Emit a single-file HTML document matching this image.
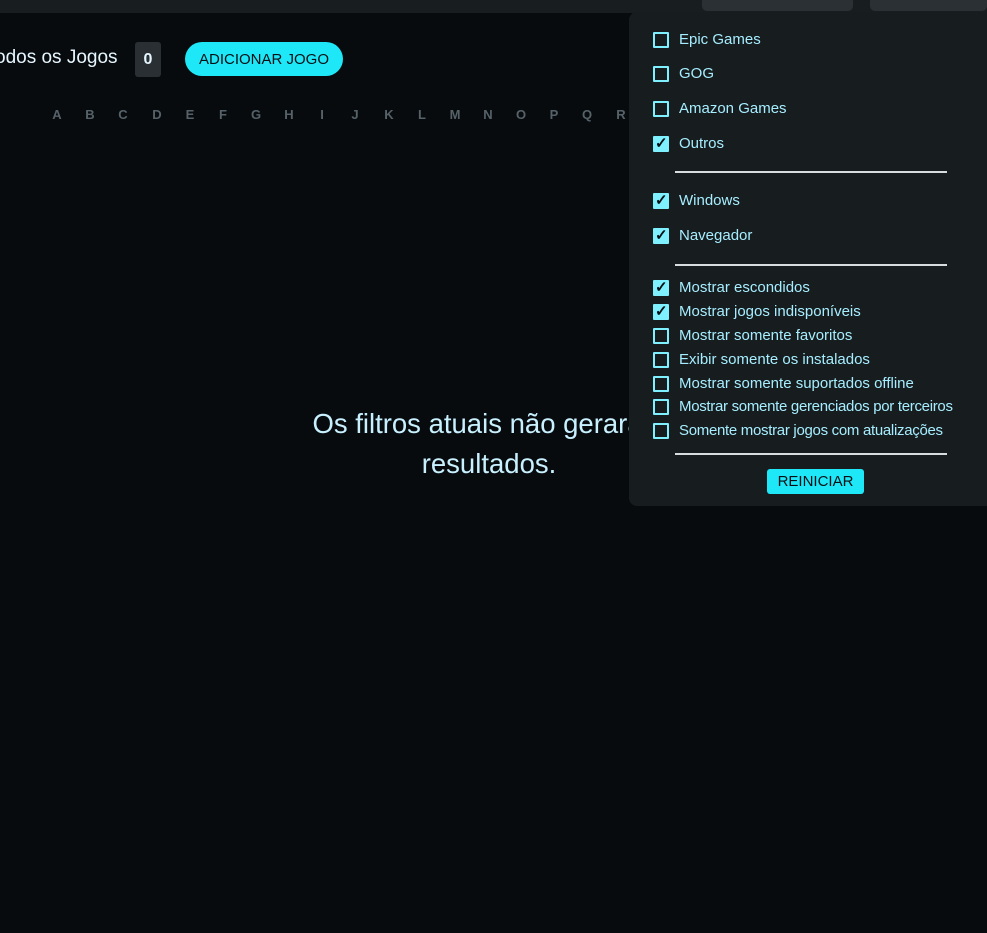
<!DOCTYPE html>
<html><head><meta charset="utf-8"><style>
*{margin:0;padding:0;box-sizing:border-box}
body{width:987px;height:933px;background:#070b0d;font-family:"Liberation Sans",sans-serif;position:relative;overflow:hidden}
.top{position:absolute;left:0;top:0;width:987px;height:13px;background:#181d20}
.tb{position:absolute;top:0;height:11px;background:#2a3034;border-radius:0 0 5px 5px}
.title{position:absolute;left:-5px;top:47px;font-size:19px;color:#e6f6ff}
.cnt{position:absolute;left:135px;top:42px;width:26px;height:35px;background:#2a2f33;border-radius:3px;color:#e6f6ff;font-size:16px;text-align:center;line-height:35px;font-weight:bold}
.add{position:absolute;left:185px;top:42px;width:158px;height:34px;background:#1ee8f8;border-radius:17px;color:#061014;font-size:15px;text-align:center;line-height:35px}
.let{position:absolute;top:107px;font-size:13px;font-weight:bold;color:#56626a;width:20px;text-align:center}
.msg{position:absolute;left:89px;width:800px;text-align:center;font-size:27.5px;color:#c8f0ff}
.pop{position:absolute;left:629px;top:12px;width:370px;height:494px;background:#171c1f;border-radius:8px}
.it{position:absolute;left:25px;font-size:15px;color:#a6eeff;line-height:18px}
.cb{position:absolute;left:-1px;top:1px;width:16px;height:16px;border:2.5px solid #7ef0ff;border-radius:1px}
.cb.on{background:#7ef0ff}
.cb.on::after{content:"✓";position:absolute;left:0px;top:-3px;font-size:15px;color:#061014;font-weight:bold}
.it span{margin-left:25px}
.hr{position:absolute;left:46px;width:272px;height:2px;background:#d8dcde}
.rst{position:absolute;left:138px;top:457px;width:97px;height:25px;background:#1ee8f8;border-radius:3px;color:#061014;font-size:15px;text-align:center;line-height:25px}
</style></head><body>
<div class="top"></div>
<div class="tb" style="left:702px;width:151px"></div>
<div class="tb" style="left:870px;width:117px"></div>
<div class="title">odos os Jogos</div>
<div class="cnt">0</div>
<div class="add">ADICIONAR JOGO</div>
<div class="let" style="left:47px">A</div><div class="let" style="left:80px">B</div><div class="let" style="left:113px">C</div><div class="let" style="left:147px">D</div><div class="let" style="left:180px">E</div><div class="let" style="left:213px">F</div><div class="let" style="left:246px">G</div><div class="let" style="left:279px">H</div><div class="let" style="left:312px">I</div><div class="let" style="left:345px">J</div><div class="let" style="left:379px">K</div><div class="let" style="left:412px">L</div><div class="let" style="left:445px">M</div><div class="let" style="left:478px">N</div><div class="let" style="left:511px">O</div><div class="let" style="left:544px">P</div><div class="let" style="left:577px">Q</div><div class="let" style="left:611px">R</div>
<div class="msg" style="top:408px">Os filtros atuais não geraram</div>
<div class="msg" style="top:448px">resultados.</div>
<div class="pop">
<div class="it" style="left:25px;top:19px"><div class="cb"></div><span>Epic Games</span></div>
<div class="it" style="top:53px"><div class="cb"></div><span>GOG</span></div>
<div class="it" style="top:88px"><div class="cb"></div><span>Amazon Games</span></div>
<div class="it" style="top:123px"><div class="cb on"></div><span>Outros</span></div>
<div class="hr" style="top:159px"></div>
<div class="it" style="top:180px"><div class="cb on"></div><span>Windows</span></div>
<div class="it" style="top:215px"><div class="cb on"></div><span>Navegador</span></div>
<div class="hr" style="top:252px"></div>
<div class="it" style="top:267px"><div class="cb on"></div><span>Mostrar escondidos</span></div>
<div class="it" style="top:291px"><div class="cb on"></div><span>Mostrar jogos indisponíveis</span></div>
<div class="it" style="top:315px"><div class="cb"></div><span>Mostrar somente favoritos</span></div>
<div class="it" style="top:339px"><div class="cb"></div><span>Exibir somente os instalados</span></div>
<div class="it" style="top:363px"><div class="cb"></div><span>Mostrar somente suportados offline</span></div>
<div class="it" style="top:386px"><div class="cb"></div><span style="letter-spacing:-0.3px">Mostrar somente gerenciados por terceiros</span></div>
<div class="it" style="top:410px"><div class="cb"></div><span style="letter-spacing:-0.3px">Somente mostrar jogos com atualizações</span></div>
<div class="hr" style="top:441px"></div>
<div class="rst">REINICIAR</div>
</div>
</body></html>
